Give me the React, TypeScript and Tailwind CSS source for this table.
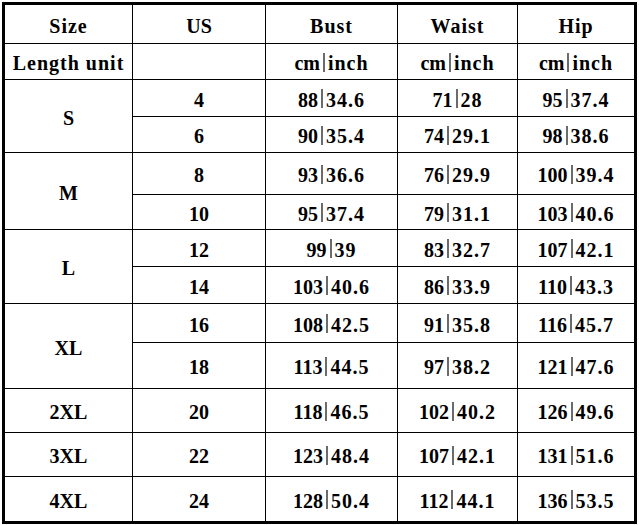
const rows: { size: string; us: string[]; bust: string[]; waist: string[]; hip: string[] }[] = [
  { size: "S", us: ["4", "6"], bust: ["88|34.6", "90|35.4"], waist: ["71|28", "74|29.1"], hip: ["95|37.4", "98|38.6"] },
  { size: "M", us: ["8", "10"], bust: ["93|36.6", "95|37.4"], waist: ["76|29.9", "79|31.1"], hip: ["100|39.4", "103|40.6"] },
  { size: "L", us: ["12", "14"], bust: ["99|39", "103|40.6"], waist: ["83|32.7", "86|33.9"], hip: ["107|42.1", "110|43.3"] },
  { size: "XL", us: ["16", "18"], bust: ["108|42.5", "113|44.5"], waist: ["91|35.8", "97|38.2"], hip: ["116|45.7", "121|47.6"] },
  { size: "2XL", us: ["20"], bust: ["118|46.5"], waist: ["102|40.2"], hip: ["126|49.6"] },
  { size: "3XL", us: ["22"], bust: ["123|48.4"], waist: ["107|42.1"], hip: ["131|51.6"] },
  { size: "4XL", us: ["24"], bust: ["128|50.4"], waist: ["112|44.1"], hip: ["136|53.5"] },
];

function Cell({ children, className = "" }: { children?: React.ReactNode; className?: string }) {
  return <div className={`bg-white flex items-center justify-center pt-[3px] ${className}`}>{children}</div>;
}

// "88|34.6" -> 88, thin grey bar, 34.6
function Pair({ v }: { v: string }) {
  const [a, b] = v.split("|");
  return (
    <span className="flex items-center">
      <span>{a}</span>
      <span className="inline-block w-[2px] h-[19px] bg-[#6b6b6b] mx-[3px] -mt-[2px]" />
      <span className="tracking-[1px]">{b}</span>
    </span>
  );
}

export default function App() {
  return (
    <div className="w-[639px] h-[525px] bg-white pt-[2px] pl-[2px]">
      <div
        className="inline-grid border-[3px] border-black bg-black text-black font-bold text-[20px] leading-none"
        style={{ fontFamily: '"Liberation Serif", "Times New Roman", serif' }}
      >
        <div className="grid grid-cols-[127px_132px_131px_119px_116px] grid-rows-[38px_35px_36px_35px_41px_34px_36px_36px_38px_45px_43px_43px_44px] gap-px">
          <Cell className="tracking-[1px]">Size</Cell>
          <Cell>US</Cell>
          <Cell className="tracking-[1px]">Bust</Cell>
          <Cell className="tracking-[1px]">Waist</Cell>
          <Cell className="tracking-[1px]">Hip</Cell>

          <Cell className="tracking-[1px]">Length unit</Cell>
          <Cell />
          <Cell><Pair v="cm|inch" /></Cell>
          <Cell><Pair v="cm|inch" /></Cell>
          <Cell><Pair v="cm|inch" /></Cell>

          {rows.map((r) => (
            <>
              <Cell key={r.size} className={r.us.length === 2 ? "row-span-2" : ""}>
                {r.size}
              </Cell>
              {r.us.map((u, i) => (
                <>
                  <Cell key={`${r.size}-us-${u}`}>{u}</Cell>
                  <Cell key={`${r.size}-b-${u}`}><Pair v={r.bust[i]} /></Cell>
                  <Cell key={`${r.size}-w-${u}`}><Pair v={r.waist[i]} /></Cell>
                  <Cell key={`${r.size}-h-${u}`}><Pair v={r.hip[i]} /></Cell>
                </>
              ))}
            </>
          ))}
        </div>
      </div>
    </div>
  );
}
